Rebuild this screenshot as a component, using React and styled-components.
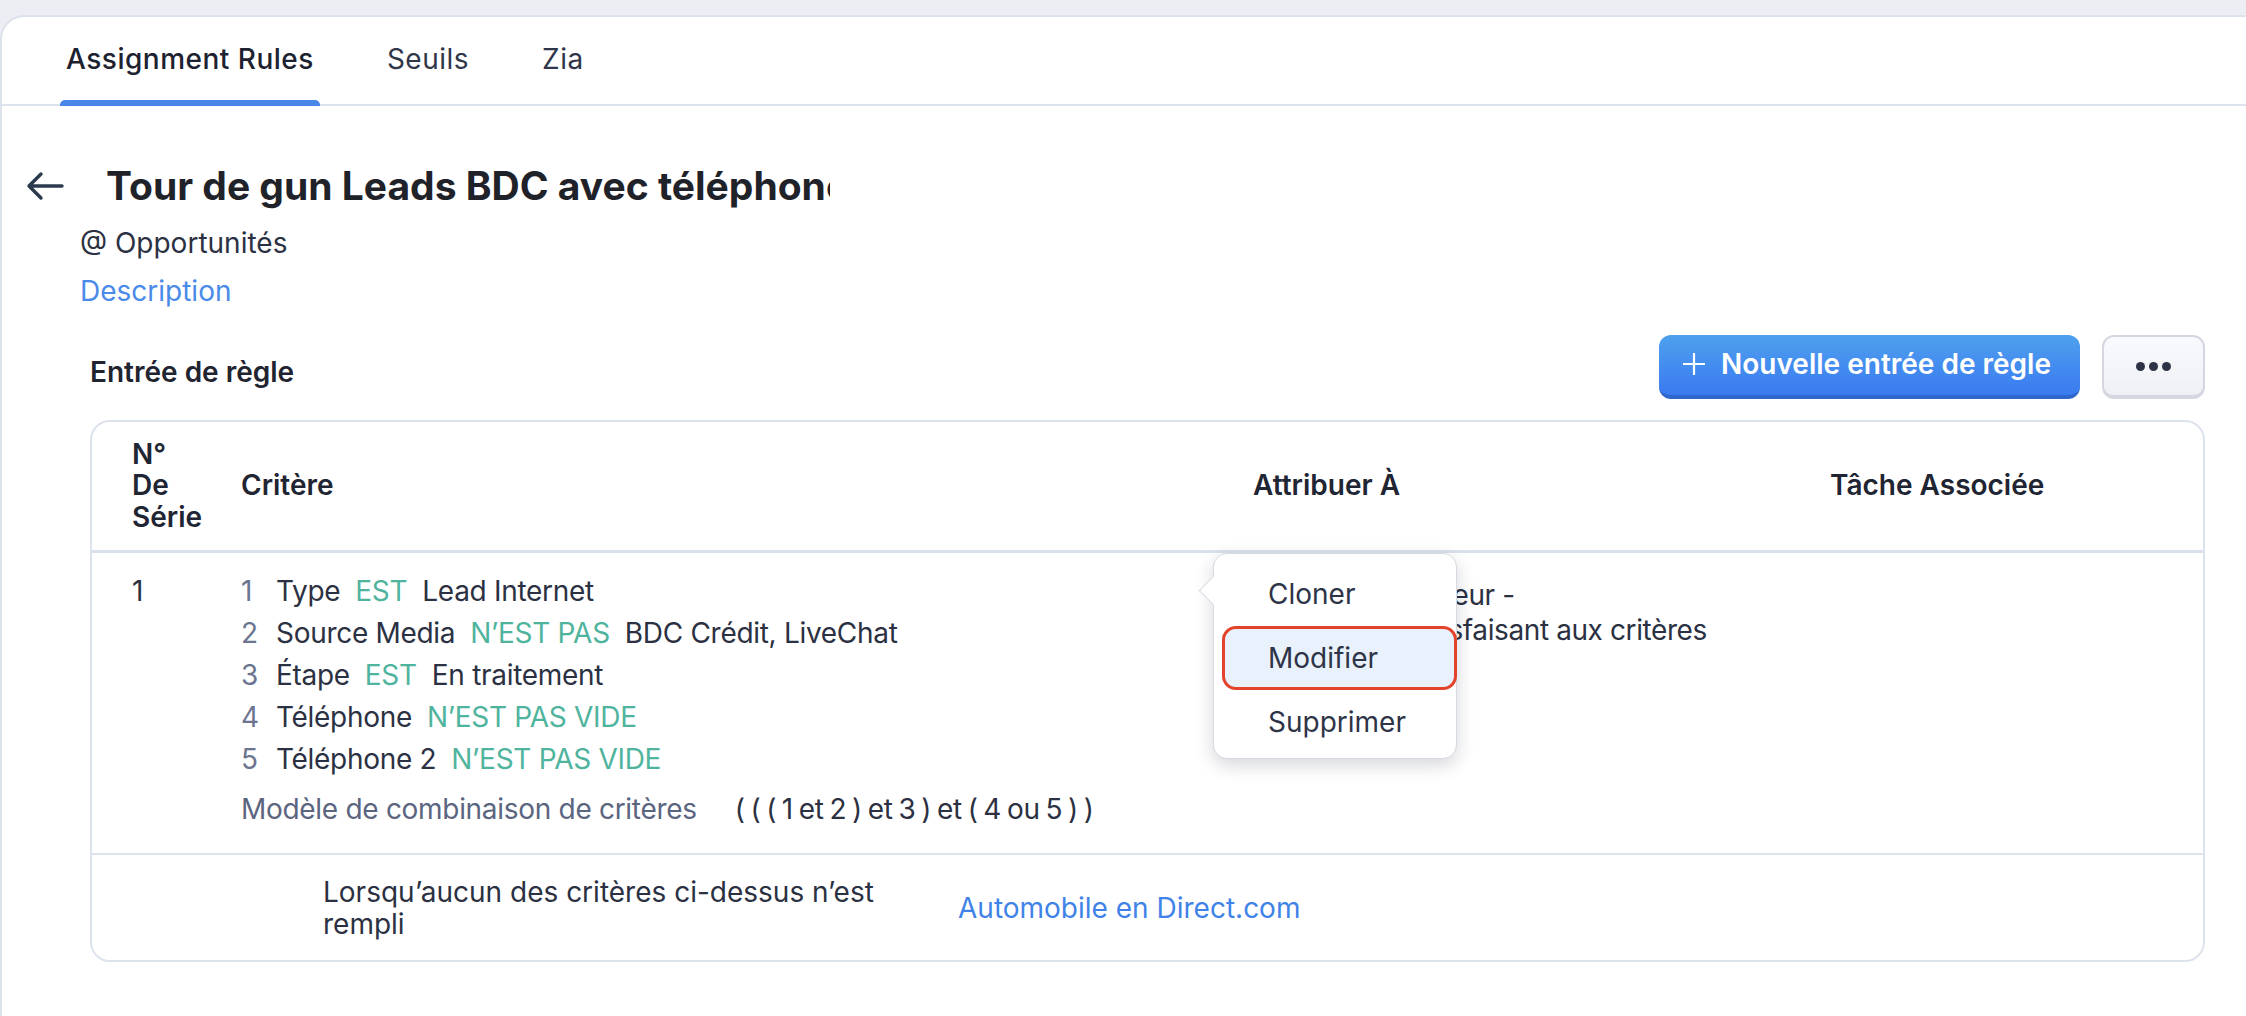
import React from 'react';
import styled, { createGlobalStyle } from 'styled-components';

const GlobalStyle = createGlobalStyle`
	html, body {
		margin: 0;
		padding: 0;
		background: #eceef3;
		font-family: Inter, 'Noto Sans', 'Liberation Sans', sans-serif;
		color: #2b3142;
	}
	* { box-sizing: border-box; }
`;

const tabs = ['Assignment Rules', 'Seuils', 'Zia'];

const criteria = [
	{ field: 'Type', op: 'EST', value: 'Lead Internet' },
	{ field: 'Source Media', op: 'N’EST PAS', value: 'BDC Crédit, LiveChat' },
	{ field: 'Étape', op: 'EST', value: 'En traitement' },
	{ field: 'Téléphone', op: 'N’EST PAS VIDE' },
	{ field: 'Téléphone 2', op: 'N’EST PAS VIDE' },
];

const menuItems = ['Cloner', 'Modifier', 'Supprimer'];

const BackArrow = () => (
	<svg width="38" height="30" viewBox="0 0 38 30" fill="none">
		<path
			d="M36 15H3M15 3L3 15l12 12"
			stroke="#2c3a4d"
			strokeWidth="3.4"
			strokeLinecap="round"
			strokeLinejoin="round"
		/>
	</svg>
);

const PlusIcon = () => (
	<svg width="22" height="22" viewBox="0 0 22 22" fill="none">
		<path d="M11 0v22M0 11h22" stroke="#fff" strokeWidth="2.2" />
	</svg>
);

const App = () => (
	<>
		<GlobalStyle />
		<Card>
			<TabBar>
				{tabs.map((t, i) => (
					<Tab key={t} active={i === 0}>
						{t}
					</Tab>
				))}
			</TabBar>

			<Header>
				<BackButton>
					<BackArrow />
				</BackButton>
				<Title>Tour de gun Leads BDC avec téléphone</Title>
			</Header>

			<Meta>
				<Module>@ Opportunités</Module>
				<DescLink>Description</DescLink>
			</Meta>

			<SectionRow>
				<SectionTitle>Entrée de règle</SectionTitle>
				<Actions>
					<PrimaryButton>
						<PlusIcon />
						Nouvelle entrée de règle
					</PrimaryButton>
					<MoreButton>
						<Dot />
						<Dot />
						<Dot />
					</MoreButton>
				</Actions>
			</SectionRow>

			<Table>
				<HeadRow>
					<HeadCell>
						N°
						<br />
						De
						<br />
						Série
					</HeadCell>
					<HeadCell>Critère</HeadCell>
					<HeadCell>Attribuer À</HeadCell>
					<HeadCell>Tâche Associée</HeadCell>
				</HeadRow>

				<BodyRow>
					<Serial>1</Serial>
					<div>
						{criteria.map((c, i) => (
							<CriteriaLine key={i}>
								<CritNum>{i + 1}</CritNum>
								<span>{c.field}</span>
								<Operator>{c.op}</Operator>
								{c.value && <span>{c.value}</span>}
							</CriteriaLine>
						))}
						<Pattern>
							<PatternLabel>Modèle de combinaison de critères</PatternLabel>
							<Formula>( ( ( 1 et 2 ) et 3 ) et ( 4 ou 5 ) )</Formula>
						</Pattern>
					</div>
					<AssignCell>
						<div>Rotation Utilisateur -</div>
						<div>Utilisateurs satisfaisant aux critères</div>
					</AssignCell>
					<div />
				</BodyRow>

				<FallbackRow>
					<FallbackText>Lorsqu’aucun des critères ci-dessus n’est rempli</FallbackText>
					<FallbackLink>Automobile en Direct.com</FallbackLink>
				</FallbackRow>

				<Menu>
					{menuItems.map((m, i) => (
						<MenuItem key={m} highlighted={i === 1}>
							{m}
						</MenuItem>
					))}
				</Menu>
			</Table>
		</Card>
	</>
);

const Card = styled.div`
	margin-top: 15px;
	min-height: calc(100vh - 15px);
	background: #fff;
	border-top: 2px solid #dde3ec;
	border-left: 2px solid #dde3ec;
	border-top-left-radius: 24px;
	padding-bottom: 40px;
`;

const TabBar = styled.div`
	display: flex;
	gap: 61px;
	height: 89px;
	padding-left: 58px;
	border-bottom: 2px solid #dde3ee;
`;

const Tab = styled.div`
	position: relative;
	display: flex;
	align-items: center;
	padding: 0 6px 4px;
	font-size: 28px;
	font-weight: ${(p) => (p.active ? 500 : 400)};
	color: ${(p) => (p.active ? '#1d2230' : '#30364a')};
	letter-spacing: 0.5px;

	&::after {
		content: '';
		display: ${(p) => (p.active ? 'block' : 'none')};
		position: absolute;
		left: 0;
		right: 0;
		bottom: -2px;
		height: 6px;
		border-radius: 5px 5px 0 0;
		background: #4a86e8;
	}
`;

const Header = styled.div`
	display: flex;
	align-items: center;
	gap: 42px;
	padding-left: 24px;
	margin-top: 56px;
	height: 48px;
`;

const BackButton = styled.div`
	display: flex;
	align-items: center;
	width: 38px;
`;

const Title = styled.h1`
	margin: 0;
	width: 724px;
	overflow: hidden;
	white-space: nowrap;
	font-size: 39px;
	font-weight: 700;
	line-height: 48px;
	color: #1f2229;
	letter-spacing: 0px;
`;

const Meta = styled.div`
	display: flex;
	flex-direction: column;
	gap: 8px;
	padding-left: 78px;
	margin-top: 13px;
	font-size: 28px;
	line-height: 40px;
`;

const Module = styled.div`
	color: #2b3142;
`;

const DescLink = styled.div`
	color: #4a8ae8;
`;

const SectionRow = styled.div`
	display: flex;
	align-items: center;
	justify-content: space-between;
	margin: 24px 41px 0 88px;
	height: 64px;
`;

const SectionTitle = styled.div`
	padding-top: 10px;
	font-size: 28px;
	font-weight: 600;
	color: #1f2430;
`;

const Actions = styled.div`
	display: flex;
	gap: 22px;
`;

const PrimaryButton = styled.button`
	display: flex;
	align-items: center;
	gap: 16px;
	height: 64px;
	width: 421px;
	padding: 0 0 2px 24px;
	border: none;
	border-bottom: 4px solid #2e66cc;
	border-radius: 12px;
	background: linear-gradient(#4ea0ee, #3a7af0);
	color: #fff;
	font-family: inherit;
	font-size: 28px;
	font-weight: 600;
`;

const MoreButton = styled.button`
	display: flex;
	align-items: center;
	justify-content: center;
	gap: 4px;
	width: 103px;
	height: 64px;
	border: 2px solid #d4d7e0;
	border-bottom-width: 4px;
	border-radius: 12px;
	background: linear-gradient(#f9fafd, #eef0f5);
`;

const Dot = styled.span`
	width: 9px;
	height: 9px;
	border-radius: 50%;
	background: #2d3345;
`;

const Table = styled.div`
	position: relative;
	margin: 21px 41px 0 88px;
	border: 2px solid #dde3ec;
	border-radius: 20px;
`;

const columns = '109px 1012px 577px 1fr';

const HeadRow = styled.div`
	display: grid;
	grid-template-columns: ${columns};
	align-items: center;
	height: 131px;
	padding-left: 40px;
	border-bottom: 3px solid #d9e1ec;
`;

const HeadCell = styled.div`
	font-size: 28px;
	font-weight: 600;
	line-height: 31.5px;
	color: #1f2533;
`;

const BodyRow = styled.div`
	display: grid;
	grid-template-columns: ${columns};
	align-items: start;
	padding: 17px 0 23px 40px;
	border-bottom: 2px solid #dde3ec;
	font-size: 28px;
	line-height: 42px;
	color: #2b3142;
`;

const Serial = styled.div`
	color: #2b3142;
`;

const CriteriaLine = styled.div`
	display: flex;
	gap: 15px;
	white-space: nowrap;
	letter-spacing: -0.3px;
`;

const CritNum = styled.span`
	width: 20px;
	color: #6b7590;
`;

const Operator = styled.span`
	color: #4fb49d;
`;

const Pattern = styled.div`
	display: flex;
	gap: 38px;
	margin-top: 8px;
	white-space: nowrap;
`;

const PatternLabel = styled.span`
	color: #5b6580;
	letter-spacing: -0.3px;
`;

const Formula = styled.span`
	word-spacing: -2px;
	letter-spacing: -0.2px;
`;

const AssignCell = styled.div`
	margin-top: 8px;
	line-height: 35px;
	letter-spacing: -0.4px;
`;

const FallbackRow = styled.div`
	display: flex;
	align-items: center;
	height: 105px;
	padding-left: 231px;
	font-size: 28px;
	line-height: 32px;
`;

const FallbackText = styled.div`
	width: 570px;
	margin-right: 65px;
	color: #2b3142;
`;

const FallbackLink = styled.div`
	color: #3f83e8;
`;

const Menu = styled.div`
	position: absolute;
	left: 1121px;
	top: 131px;
	width: 244px;
	padding: 8px 0 4px;
	background: #fff;
	border: 1px solid #d6d9e0;
	border-radius: 14px;
	box-shadow: 0 6px 18px rgba(20, 30, 50, 0.18);

	&::before {
		content: '';
		position: absolute;
		left: -11px;
		top: 26px;
		width: 20px;
		height: 20px;
		background: #fff;
		border-left: 1px solid #d6d9e0;
		border-bottom: 1px solid #d6d9e0;
		transform: rotate(45deg);
	}
`;

const MenuItem = styled.div`
	position: relative;
	display: flex;
	align-items: center;
	height: 64px;
	margin-left: 8px;
	padding-left: ${(p) => (p.highlighted ? '43px' : '46px')};
	font-size: 28px;
	color: #2e3447;
	border-radius: 14px;
	background: ${(p) => (p.highlighted ? '#e9f1fd' : 'transparent')};
	border: ${(p) => (p.highlighted ? '3px solid #e4432b' : 'none')};
	margin-right: ${(p) => (p.highlighted ? '-1px' : '0')};
`;

export default App;
